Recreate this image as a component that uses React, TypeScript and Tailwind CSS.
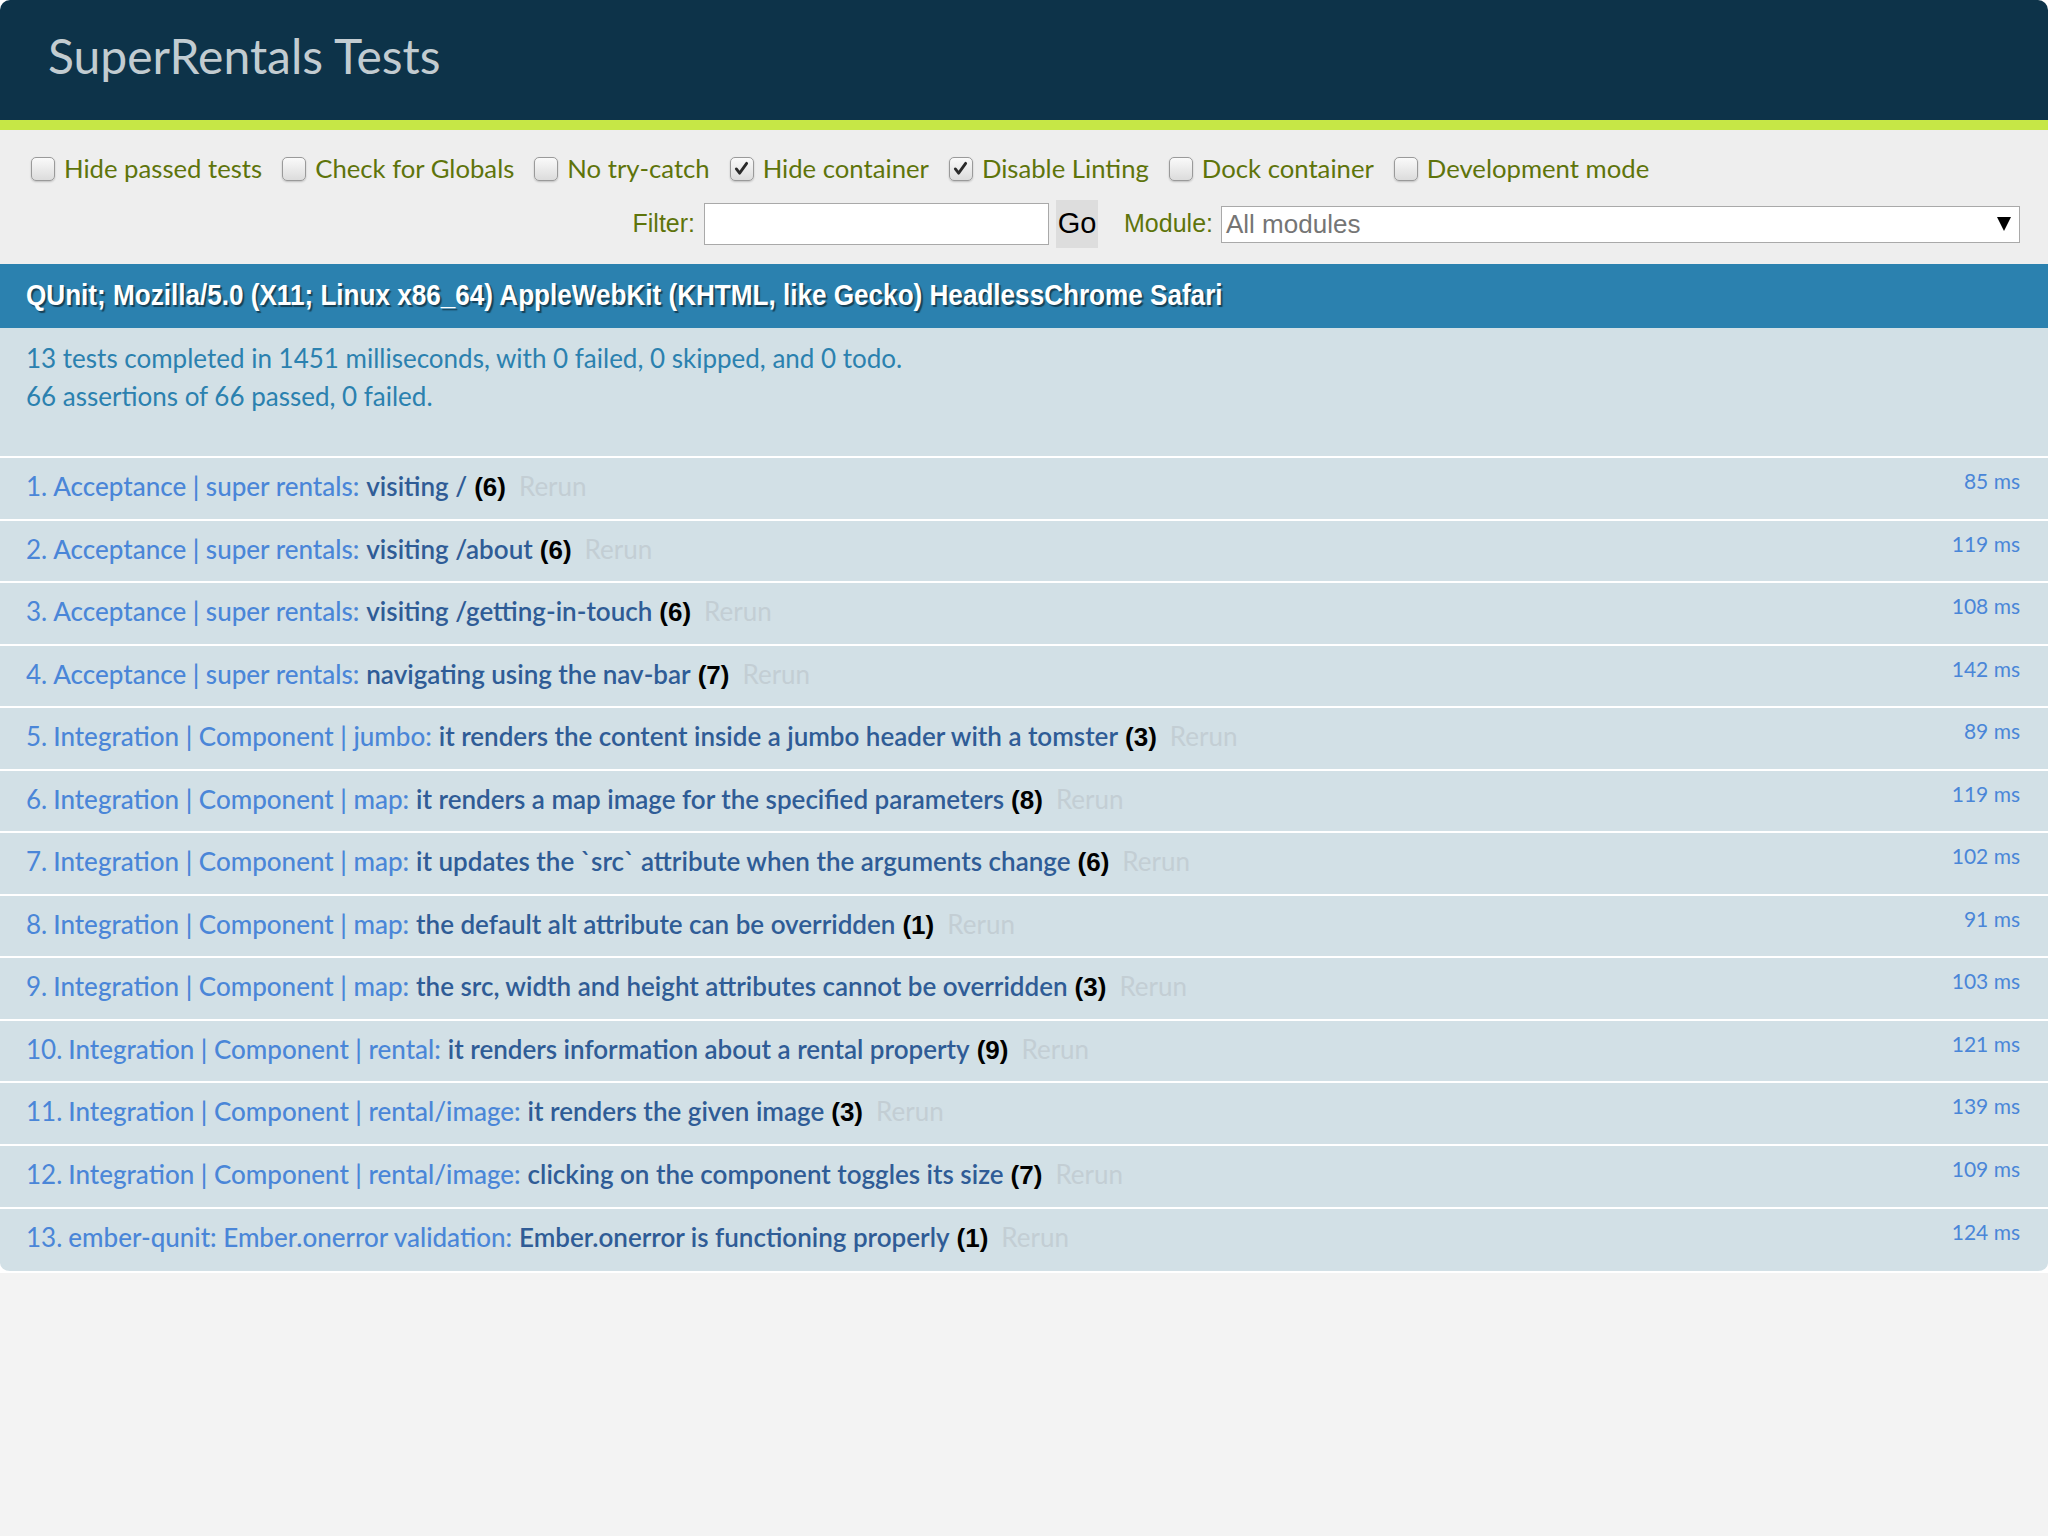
import React from 'react';

interface TestRow {
    module: string;
    name: string;
    count: number;
    ms: number;
}

const tests: TestRow[] = [
    { module: 'Acceptance | super rentals:', name: 'visiting /', count: 6, ms: 85 },
    { module: 'Acceptance | super rentals:', name: 'visiting /about', count: 6, ms: 119 },
    { module: 'Acceptance | super rentals:', name: 'visiting /getting-in-touch', count: 6, ms: 108 },
    { module: 'Acceptance | super rentals:', name: 'navigating using the nav-bar', count: 7, ms: 142 },
    { module: 'Integration | Component | jumbo:', name: 'it renders the content inside a jumbo header with a tomster', count: 3, ms: 89 },
    { module: 'Integration | Component | map:', name: 'it renders a map image for the specified parameters', count: 8, ms: 119 },
    { module: 'Integration | Component | map:', name: 'it updates the `src` attribute when the arguments change', count: 6, ms: 102 },
    { module: 'Integration | Component | map:', name: 'the default alt attribute can be overridden', count: 1, ms: 91 },
    { module: 'Integration | Component | map:', name: 'the src, width and height attributes cannot be overridden', count: 3, ms: 103 },
    { module: 'Integration | Component | rental:', name: 'it renders information about a rental property', count: 9, ms: 121 },
    { module: 'Integration | Component | rental/image:', name: 'it renders the given image', count: 3, ms: 139 },
    { module: 'Integration | Component | rental/image:', name: 'clicking on the component toggles its size', count: 7, ms: 109 },
    { module: 'ember-qunit: Ember.onerror validation:', name: 'Ember.onerror is functioning properly', count: 1, ms: 124 },
];

const options = [
    { label: 'Hide passed tests', checked: false },
    { label: 'Check for Globals', checked: false },
    { label: 'No try-catch', checked: false },
    { label: 'Hide container', checked: true },
    { label: 'Disable Linting', checked: true },
    { label: 'Dock container', checked: false },
    { label: 'Development mode', checked: false },
];

function Checkbox({ checked }: { checked: boolean }) {
    return (
        <span className="flex h-[24px] w-[24px] shrink-0 items-center justify-center rounded-[5px] border border-[#9a9a9a] bg-gradient-to-b from-[#fafafa] to-[#dcdcdc] shadow-[0_1px_2px_rgba(0,0,0,0.2)]">
            {checked && (
                <svg viewBox="0 0 16 16" className="h-[17px] w-[15px]">
                    <path d="M2.5 8.5 L6 13 L13.5 2.5" fill="none" stroke="#2a2a2a" strokeWidth={3} strokeLinecap="round" strokeLinejoin="round" />
                </svg>
            )}
        </span>
    );
}

export default function App() {
    return (
        <div className="flex min-h-screen flex-col bg-white font-['Lato',sans-serif]">
            {/* header */}
            <div className="flex h-[120px] items-center rounded-t-[10px] bg-[#0d3349] pb-[8px] pl-[48px]">
                <h1 className="text-[48px] font-normal leading-none text-[#c2ccd1]">SuperRentals Tests</h1>
            </div>
            <div className="h-[10px] bg-[#c6e746]" />

            {/* toolbar */}
            <div className="flex h-[134px] flex-col bg-[#eeeeee] pt-[25px] text-[#5e740b]">
                <div className="flex h-[28px] items-center pl-[31px]">
                    {options.map((o) => (
                        <label key={o.label} className="mr-[20px] flex items-center gap-[9px] text-[25.7px] leading-none">
                            <Checkbox checked={o.checked} />
                            <span>{o.label}</span>
                        </label>
                    ))}
                </div>
                <div className="mt-[17px] flex h-[48px] items-center justify-end pr-[28px] font-['Liberation_Sans',sans-serif]">
                    <span className="mr-[9px] text-[25px]">Filter:</span>
                    <div className="h-[42px] w-[345px] border border-[#a9a9a9] bg-white" />
                    <div className="ml-[7px] flex h-[48px] w-[42px] items-center justify-center bg-[#dddddd] text-[29px] text-black">Go</div>
                    <span className="ml-[26px] mr-[8px] text-[25px]">Module:</span>
                    <div className="flex h-[37px] w-[799px] items-center justify-between border border-[#a9a9a9] bg-white pl-[4px] pr-[8px]">
                        <span className="text-[26px] text-[#757575]">All modules</span>
                        <svg viewBox="0 0 14 16" className="h-[16px] w-[14px]">
                            <polygon points="0,1 14,1 7,15" fill="#000" />
                        </svg>
                    </div>
                </div>
            </div>

            {/* user agent */}
            <div className="flex h-[64px] items-center bg-[#2b81af] pl-[26px] font-['Liberation_Sans',sans-serif] text-[29px] font-bold text-white [text-shadow:2px_2px_1px_rgba(0,0,0,0.5)]">
                <span className="inline-block origin-left scale-x-[0.9] whitespace-nowrap">
                    QUnit; Mozilla/5.0 (X11; Linux x86_64) AppleWebKit (KHTML, like Gecko) HeadlessChrome Safari
                </span>
            </div>

            {/* summary */}
            <div className="border-b-2 border-white bg-[#d2e0e6] pb-[41px] pl-[26px] pt-[11px] text-[26px] leading-[38px] text-[#2b81af]">
                <div>13 tests completed in 1451 milliseconds, with 0 failed, 0 skipped, and 0 todo.</div>
                <div>66 assertions of 66 passed, 0 failed.</div>
            </div>

            {/* tests */}
            <ol className="overflow-hidden rounded-b-[10px] border-b-2 border-white">
                {tests.map((t, i) => (
                    <li
                        key={i}
                        className="flex h-[62.55px] items-start justify-between border-b-2 border-white bg-[#d2e0e6] pl-[26px] pr-[28px] pt-[10px] last:border-b-0"
                    >
                        <div className="flex items-baseline whitespace-nowrap text-[26px] leading-[36px]">
                            <span className="mr-[6px] text-[#4a86d8]">{i + 1}.</span>
                            <span className="font-medium text-[#4a86d8]">{t.module}</span>
                            <span className="ml-[7px] font-semibold text-[#2f5c96]">{t.name}</span>
                            <span className="ml-[7px] inline-block font-['Liberation_Sans',sans-serif] font-bold text-black">({t.count})</span>
                            <span className="ml-[13px] text-[#c3ced4]">Rerun</span>
                        </div>
                        <span className="text-[21px] leading-[26px] text-[#4a86d8]">{t.ms} ms</span>
                    </li>
                ))}
            </ol>

            <div className="flex-1 bg-[#f3f3f3]" />
        </div>
    );
}
